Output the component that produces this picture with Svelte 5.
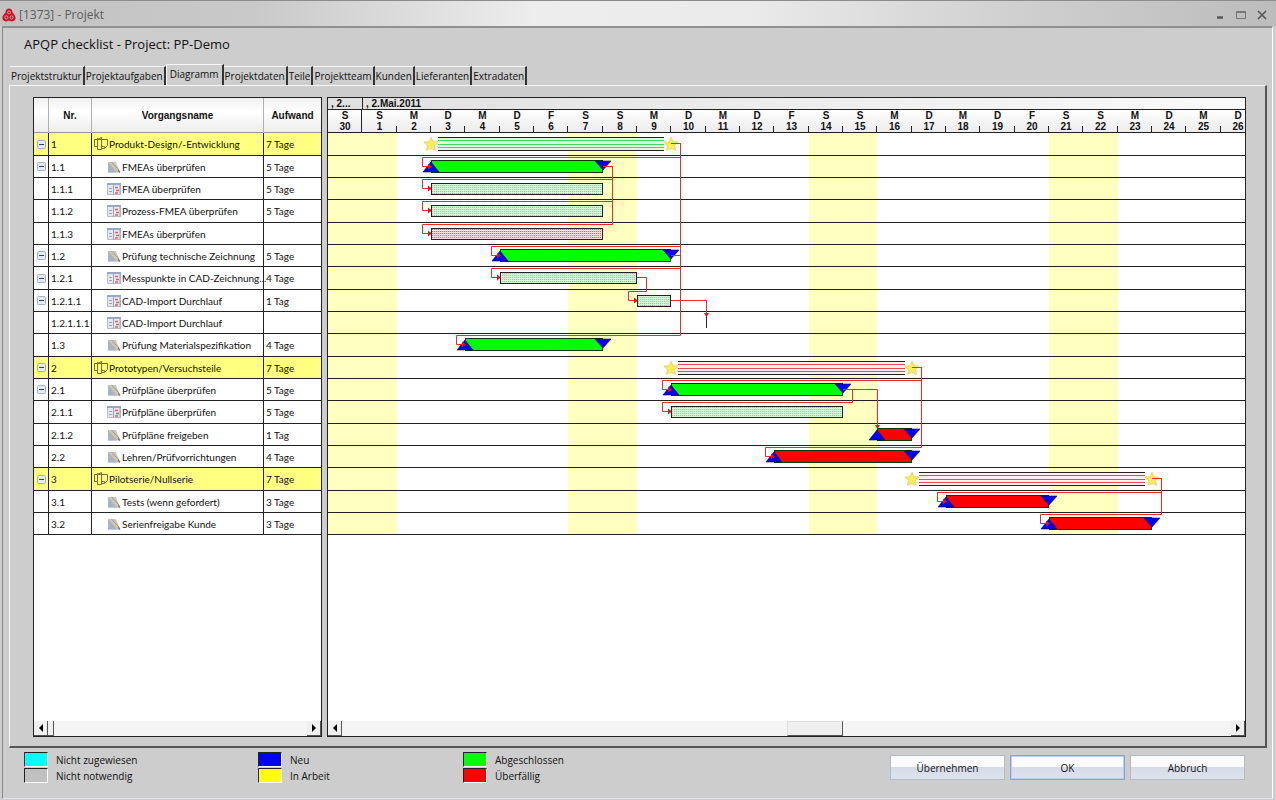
<script lang="ts">
  type Kind = 'phase' | 'task' | 'step' | 'point';

  interface Row {
    nr: string;
    name: string;
    effort: string;
    kind: Kind;
    icon: 'phase' | 'task' | 'form';
    open: boolean;
    start: number;
    end: number;
    color: 'green' | 'red';
  }

  const tabs = ['Projektstruktur', 'Projektaufgaben', 'Diagramm', 'Projektdaten', 'Teile', 'Projektteam', 'Kunden', 'Lieferanten', 'Extradaten'];
  let activeTab = $state('Diagramm');

  // start and end are day columns, counted from Saturday the 30th
  const rows: Row[] = [
    { nr: '1', name: 'Produkt-Design/-Entwicklung', effort: '7 Tage', kind: 'phase', icon: 'phase', open: true, start: 3, end: 10, color: 'green' },
    { nr: '1.1', name: 'FMEAs überprüfen', effort: '5 Tage', kind: 'task', icon: 'task', open: true, start: 3, end: 8, color: 'green' },
    { nr: '1.1.1', name: 'FMEA überprüfen', effort: '5 Tage', kind: 'step', icon: 'form', open: false, start: 3, end: 8, color: 'green' },
    { nr: '1.1.2', name: 'Prozess-FMEA überprüfen', effort: '5 Tage', kind: 'step', icon: 'form', open: false, start: 3, end: 8, color: 'green' },
    { nr: '1.1.3', name: 'FMEAs überprüfen', effort: '', kind: 'step', icon: 'form', open: false, start: 3, end: 8, color: 'red' },
    { nr: '1.2', name: 'Prüfung technische Zeichnung', effort: '5 Tage', kind: 'task', icon: 'task', open: true, start: 5, end: 10, color: 'green' },
    { nr: '1.2.1', name: 'Messpunkte in CAD-Zeichnung...', effort: '4 Tage', kind: 'step', icon: 'form', open: true, start: 5, end: 9, color: 'green' },
    { nr: '1.2.1.1', name: 'CAD-Import Durchlauf', effort: '1 Tag', kind: 'step', icon: 'form', open: true, start: 9, end: 10, color: 'green' },
    { nr: '1.2.1.1.1', name: 'CAD-Import Durchlauf', effort: '', kind: 'point', icon: 'form', open: false, start: 11, end: 11, color: 'green' },
    { nr: '1.3', name: 'Prüfung Materialspezifikation', effort: '4 Tage', kind: 'task', icon: 'task', open: false, start: 4, end: 8, color: 'green' },
    { nr: '2', name: 'Prototypen/Versuchsteile', effort: '7 Tage', kind: 'phase', icon: 'phase', open: true, start: 10, end: 17, color: 'red' },
    { nr: '2.1', name: 'Prüfpläne überprüfen', effort: '5 Tage', kind: 'task', icon: 'task', open: true, start: 10, end: 15, color: 'green' },
    { nr: '2.1.1', name: 'Prüfpläne überprüfen', effort: '5 Tage', kind: 'step', icon: 'form', open: false, start: 10, end: 15, color: 'green' },
    { nr: '2.1.2', name: 'Prüfpläne freigeben', effort: '1 Tag', kind: 'task', icon: 'task', open: false, start: 16, end: 17, color: 'red' },
    { nr: '2.2', name: 'Lehren/Prüfvorrichtungen', effort: '4 Tage', kind: 'task', icon: 'task', open: false, start: 13, end: 17, color: 'red' },
    { nr: '3', name: 'Pilotserie/Nullserie', effort: '7 Tage', kind: 'phase', icon: 'phase', open: true, start: 17, end: 24, color: 'red' },
    { nr: '3.1', name: 'Tests (wenn gefordert)', effort: '3 Tage', kind: 'task', icon: 'task', open: false, start: 18, end: 21, color: 'red' },
    { nr: '3.2', name: 'Serienfreigabe Kunde', effort: '3 Tage', kind: 'task', icon: 'task', open: false, start: 21, end: 24, color: 'red' },
  ];

  // [from row, to row]
  const links = [
    [0, 1], [0, 5], [0, 9], [1, 2], [1, 3], [1, 4], [5, 6], [6, 7],
    [10, 11], [10, 14], [11, 12], [15, 16], [15, 17],
  ];
  const drops = [[7, 8], [11, 13]];

  const letters = ['S', 'S', 'M', 'D', 'M', 'D', 'F'];
  const days = Array.from({ length: 27 }, (_, i) => ({ letter: letters[i % 7], date: i === 0 ? 30 : i }));
  const weekends = [0, 7, 14, 21];

  // three days take 34 + 35 + 34 px, three rows 23 + 22 + 22 px
  const dayX = (d: number) => Math.round((d * 103) / 3);
  const rowY = (r: number) => Math.ceil((r * 67) / 3);
  const barY = (r: number) => rowY(r) - 1;
  const chartHeight = rowY(rows.length);

  const fills = { green: '#00ff00', red: '#ff0000' };
  const lineColors = { green: '#3fd860', red: '#e84858' };
  const tints = { green: '#dcfbdc', red: '#fff0f0' };

  function linkPath([from, to]: number[]) {
    const x1 = dayX(rows[from].end);
    const x2 = dayX(rows[to].start);
    return `M${x1} ${barY(from) + 11.5}H${x1 + 9.5}V${barY(to) + 2.5}H${x2 - 8.5}V${barY(to) + 11.5}H${x2}`;
  }

  function dropPath([from, to]: number[]) {
    return `M${dayX(rows[from].end)} ${barY(from) + 11.5}H${dayX(rows[to].start) + 0.5}V${barY(to) + 4}`;
  }

  const legend = [
    { label: 'Nicht zugewiesen', color: 'cyan' },
    { label: 'Neu', color: 'blue' },
    { label: 'Abgeschlossen', color: 'lime' },
    { label: 'Nicht notwendig', color: 'none' },
    { label: 'In Arbeit', color: 'yellow' },
    { label: 'Überfällig', color: 'red' },
  ];
</script>

{#snippet star(x: number, y: number)}
  <path
    transform="translate({x} {y})"
    d="M0 -6.5L2 -2.2L6.8 -1.8L3.2 1.4L4.4 6L0 4.4L-4.4 6L-3.2 1.4L-6.8 -1.8L-2 -2.2Z"
    fill="#fff04e" stroke="#eedb7c" stroke-width="1.4" stroke-linejoin="round"
  />
{/snippet}

{#snippet arrow(dir: string)}
  <svg width="4" height="8" viewBox="0 0 4 8" aria-hidden="true">
    <path d={dir === 'left' ? 'M4 0V8L0 4Z' : 'M0 0V8L4 4Z'} fill="#000" />
  </svg>
{/snippet}

<div class="window">
  <header class="titlebar">
    <svg width="14" height="14" viewBox="0 0 14 14" aria-hidden="true">
      <path d="M7 0.4C9 0.4 10.4 1.8 10.3 3.6C10.3 5.2 13.6 7 13.6 9.8C13.6 12 12 13.4 10 13.4C8.6 13.4 8 12.8 7 12.8C6 12.8 5.4 13.4 4 13.4C2 13.4 0.4 12 0.4 9.8C0.4 7 3.7 5.2 3.7 3.6C3.6 1.8 5 0.4 7 0.4Z" fill="#cc1124" />
      <g fill="none" stroke="#eeb4b8" stroke-width="0.8">
        <circle cx="7" cy="4.4" r="1.5" />
        <circle cx="4.4" cy="9.4" r="1.6" />
        <circle cx="9.6" cy="9.4" r="1.6" />
      </g>
    </svg>
    <h1>[1373] - Projekt</h1>
    <div class="window-buttons">
      <button aria-label="Minimieren">
        <svg width="12" height="12" viewBox="0 0 12 12"><path d="M3 8.5H9" stroke="#555" stroke-width="2.4" /></svg>
      </button>
      <button aria-label="Maximieren">
        <svg width="12" height="12" viewBox="0 0 12 12"><path d="M1.5 2.5H10.5V9.5H1.5Z" fill="none" stroke="#777" /><path d="M1 3H11" stroke="#777" stroke-width="2" /></svg>
      </button>
      <button aria-label="Schließen">
        <svg width="12" height="12" viewBox="0 0 12 12"><path d="M2 2L10 10M10 2L2 10" stroke="#555" stroke-width="1.6" /></svg>
      </button>
    </div>
  </header>

  <main>
    <h2>APQP checklist - Project: PP-Demo</h2>

    <div class="tabs" role="tablist">
      {#each tabs as tab}
        <button role="tab" class="tab" class:active={tab === activeTab} aria-selected={tab === activeTab} onclick={() => (activeTab = tab)}>{tab}</button>
      {/each}
    </div>

    <section class="panel">
      <div class="list">
        <table>
          <colgroup>
            <col class="col-toggle" />
            <col class="col-nr" />
            <col />
            <col class="col-effort" />
          </colgroup>
          <thead>
            <tr>
              <th aria-label="Aufklappen"></th>
              <th>Nr.</th>
              <th>Vorgangsname</th>
              <th>Aufwand</th>
            </tr>
          </thead>
          <tbody>
            {#each rows as row}
              <tr class:phase={row.kind === 'phase'}>
                <td class="toggle">
                  {#if row.open}
                    <button aria-label="Zuklappen">
                      <svg width="9" height="9" viewBox="0 0 9 9"><rect x="0.5" y="0.5" width="8" height="8" rx="1" fill="#e6eaf2" stroke="#a3b0c4" /><path d="M2 4.5H7" stroke="#33415c" /></svg>
                    </button>
                  {/if}
                </td>
                <td>{row.nr}</td>
                <td>
                  <div class="name" class:child={row.kind !== 'phase'}>
                    {#if row.icon === 'phase'}
                      <svg width="14" height="14" viewBox="0 0 14 14" aria-hidden="true">
                        <path d="M0.5 2.5H13.5V8.5L10.5 11.5H7.5M0.5 2.5V9.5H3M3.5 1V12.5H7.5V0.5L3.5 2.5M7.5 9.5H10.5V11" fill="none" stroke="#77702c" />
                      </svg>
                    {:else if row.icon === 'task'}
                      <svg width="14" height="14" viewBox="0 0 14 14" aria-hidden="true">
                        <path d="M1 2H9L13 12.5H1Z" fill="#c3c9d6" />
                        <path d="M1 2L10 12.5H1Z" fill="#a9b2c6" />
                        <path d="M3.5 2.5L11.5 11" stroke="#dcc88a" stroke-width="2.4" />
                        <path d="M4.5 2L12.5 10.5" stroke="#8d8a84" stroke-width="0.8" />
                        <path d="M11 10.5L13 12.5" stroke="#77777c" stroke-width="1.4" />
                      </svg>
                    {:else}
                      <svg width="14" height="14" viewBox="0 0 14 14" aria-hidden="true">
                        <path d="M0.5 1.5H13.5V12.5H0.5Z" fill="#e6e8ee" stroke="#b8bdc8" />
                        <path d="M0 2H14" stroke="#9aa8c4" stroke-width="2" />
                        <path d="M2 6.5H5M2 9.5H5" stroke="#9aa0ac" />
                        <path d="M6.5 3V13M13 3V13" stroke="#9ea4b2" />
                        <path d="M8 5.5H11M9 8.5H12M8 11H11" stroke="#cf6a70" stroke-width="1.6" />
                      </svg>
                    {/if}
                    <span>{row.name}</span>
                  </div>
                </td>
                <td>{row.effort}</td>
              </tr>
            {/each}
          </tbody>
        </table>
        <div class="scrollbar">
          <button aria-label="Nach links">{@render arrow('left')}</button>
          <div class="track"><div class="thumb small"></div></div>
          <button aria-label="Nach rechts">{@render arrow('right')}</button>
        </div>
      </div>

      <div class="chart">
        <div class="timescale">
          <div class="months">
            <span class="month first">, 2...</span>
            <span class="month">, 2.Mai.2011</span>
          </div>
          <div class="days">
            {#each days as day}
              <div class="day"><span>{day.letter}</span><span>{day.date}</span></div>
            {/each}
          </div>
        </div>

        <svg width="100%" height={chartHeight} role="img" aria-label="Gantt-Diagramm">
          <defs>
            <pattern id="dots-green" width="4" height="4" patternUnits="userSpaceOnUse">
              <rect width="4" height="4" fill="#d2fad2" />
              <path d="M0 0H1V1H0ZM2 2H3V3H2ZM2 0H3V1H2ZM0 2H1V3H0Z" fill="#70ec80" />
            </pattern>
            <pattern id="dots-red" width="4" height="4" patternUnits="userSpaceOnUse">
              <rect width="4" height="4" fill="#ffdcdc" />
              <path d="M0 0H1V1H0ZM2 2H3V3H2ZM2 0H3V1H2ZM0 2H1V3H0Z" fill="#ff6068" />
            </pattern>
          </defs>

          {#each weekends as d}
            <rect x={dayX(d)} y="0" width={dayX(d + 2) - dayX(d)} height={chartHeight} fill="#ffffc0" />
          {/each}
          {#each rows as _, i}
            <rect x="0" y={rowY(i + 1) - 1} width="100%" height="1" fill="#222" />
          {/each}

          {#each rows as row, i}
            {@const x1 = dayX(row.start)}
            {@const x2 = dayX(row.end)}
            {@const y = barY(i)}
            {#if row.kind === 'phase'}
              <rect x={x1 + 7} y={y + 5} width={x2 - x1 - 14} height="14" fill={tints[row.color]} />
              {#each [5, 8, 12, 15, 18] as dy}
                <rect x={x1 + 7} y={y + dy} width={x2 - x1 - 14} height="1" fill={dy === 5 || dy === 18 ? '#222' : lineColors[row.color]} />
              {/each}
              {@render star(x1, y + 12)}
              {@render star(x2, y + 12)}
            {:else if row.kind === 'task'}
              <rect x={x1 + 0.5} y={y + 5.5} width={x2 - x1 - 1} height="12" fill={fills[row.color]} stroke="#063a06" />
              <path d="M{x1} {y + 7}L{x1 + 8} {y + 17}H{x1 - 8}Z" fill="#0000f0" stroke="#000060" stroke-width="0.6" />
              <path d="M{x2} {y + 15}L{x2 + 8} {y + 6}H{x2 - 8}Z" fill="#0000f0" stroke="#000060" stroke-width="0.6" />
            {:else if row.kind === 'step'}
              <rect x={x1 + 0.5} y={y + 6.5} width={x2 - x1 - 1} height="11" fill="url(#dots-{row.color})" stroke="#222" />
            {:else}
              <rect x={x1} y={y + 5} width="1" height="12" fill="#222" />
            {/if}
          {/each}

          {#each links as link}
            {@const x = dayX(rows[link[1]].start)}
            {@const y = barY(link[1])}
            <path d={linkPath(link)} fill="none" stroke="#f02828" />
            <path d="M{x - 3} {y + 8.5}V{y + 14.5}L{x + 1} {y + 11.5}Z" fill="#d81818" />
          {/each}
          {#each drops as drop}
            {@const x = dayX(rows[drop[1]].start)}
            {@const y = barY(drop[1])}
            <path d={dropPath(drop)} fill="none" stroke="#f02828" />
            <path d="M{x - 2} {y + 2}H{x + 3}L{x + 0.5} {y + 6}Z" fill="#d81818" />
          {/each}
        </svg>

        <div class="scrollbar">
          <button aria-label="Nach links">{@render arrow('left')}</button>
          <div class="track"><div class="thumb large"></div></div>
          <button aria-label="Nach rechts">{@render arrow('right')}</button>
        </div>
      </div>
    </section>

    <footer>
      <ul class="legend">
        {#each legend as item}
          <li><span class="swatch {item.color}"></span>{item.label}</li>
        {/each}
      </ul>
      <div class="actions">
        <button>Übernehmen</button>
        <button class="default">OK</button>
        <button>Abbruch</button>
      </div>
    </footer>
  </main>
</div>

<style>
  .window, .window * { box-sizing: border-box; }

  .window {
    display: flex;
    flex-direction: column;
    min-height: 100vh;
    padding: 0 3px 1px 2px;
    background: #cdcdcd;
    font-family: 'Open Sans', 'Noto Sans', sans-serif;
    font-size: 10px;
    color: #111;
  }

  button {
    font: inherit;
    color: inherit;
    padding: 0;
    margin: 0;
    border: 0;
    background: none;
  }

  svg { display: block; flex: none; }

  .titlebar {
    display: flex;
    align-items: center;
    gap: 3px;
    height: 26px;
    margin: 0 -3px 0 -2px;
    padding: 3px 8px 0 2px;
    border-top: 1px solid #8c8c8c;
    background: linear-gradient(90deg, #c2c2c2, #c9c9c9 20%, #ededed 42%, #ebebeb 58%, #cfcfcf 80%, #bcbcbc);
  }

  h1, h2 { margin: 0; font-weight: 400; }
  h1 { flex: 1; font-size: 12px; line-height: 20px; color: #5c5c5c; }
  h2 { padding: 6px 0 11px 21px; font-size: 13px; line-height: 20px; }

  .window-buttons { display: flex; gap: 9px; }

  main {
    flex: 1;
    display: flex;
    flex-direction: column;
    border-top: 2px solid #909090;
    border-left: 1px solid #8a8a8a;
    border-right: 1px solid #fff;
    border-bottom: 1px solid #e4e2f0;
  }

  .tabs {
    display: flex;
    align-items: flex-end;
    height: 20px;
    margin-left: 7px;
  }

  .tab {
    height: 19px;
    padding: 0 1px;
    line-height: 18px;
    border-top: 1px solid #f6f6f6;
    border-right: 2px solid #333;
  }

  .tab.active {
    height: 21px;
    padding: 0 3px 2px;
    border-left: 1px solid #f6f6f6;
    background: #cdcdcd;
    position: relative;
  }

  .panel {
    flex: 1;
    display: flex;
    gap: 5px;
    margin: 0 5px 0 6px;
    padding: 11px 19px 9px 23px;
    border-top: 1px solid #f6f6f6;
    border-left: 1px solid #f6f6f6;
    border-right: 2px solid #555;
    border-bottom: 2px solid #555;
  }

  .list, .chart {
    display: flex;
    flex-direction: column;
    background: #fff;
    border: 1px solid #222;
    font-size: 10px;
  }

  .list {
    flex: none;
    width: 289px;
    font-family: Lato, 'Liberation Sans', sans-serif;
  }

  .chart {
    flex: 1;
    min-width: 0;
    font-family: 'Liberation Sans', Arial, sans-serif;
  }

  table {
    width: 100%;
    table-layout: fixed;
    border-collapse: separate;
    border-spacing: 0;
  }

  .col-toggle { width: 15px; }
  .col-nr { width: 43px; }
  .col-effort { width: 57px; }

  th {
    height: 35px;
    padding: 0;
    font-family: 'Liberation Sans', Arial, sans-serif;
    font-size: 10px;
    border-right: 1px solid #b0b0b0;
    border-bottom: 1px solid #999;
    background: linear-gradient(#f0f0f0, #fff 40%, #ededed);
  }

  td {
    height: 22px;
    padding: 0 2px;
    line-height: 14px;
    white-space: nowrap;
    border-right: 1px solid #222;
    border-bottom: 1px solid #222;
  }

  tr:nth-child(3n + 1) td { height: 23px; }
  th:last-child, td:last-child { border-right: 0; }

  .phase td { background: #ffff80; }

  td.toggle { padding: 0 0 0 3px; }
  .toggle button { display: block; }

  .name { display: flex; align-items: center; gap: 1px; }
  .name.child { padding-left: 13px; }

  .scrollbar {
    display: flex;
    height: 15px;
    margin-top: auto;
    background: #f4f4f4;
  }

  .scrollbar button, .thumb {
    display: flex;
    align-items: center;
    justify-content: center;
    width: 14px;
    background: #efefef;
    border-right: 1px solid #555;
    border-bottom: 1px solid #555;
  }

  .track { flex: 1; display: flex; }
  .thumb.small { width: 6px; }
  .thumb.large {
    width: 56px;
    margin-left: 50%;
    border-top: 1px solid #ddd;
    border-left: 1px solid #ddd;
  }

  .timescale {
    overflow: hidden;
    font-weight: 700;
    line-height: 11px;
    border-bottom: 1px solid #222;
  }

  .months {
    display: flex;
    height: 12px;
    border-bottom: 1px solid #222;
    background: linear-gradient(90deg, #e0e0e0, #fafafa);
  }

  .month { padding-left: 3px; }
  .month.first { width: 35px; border-right: 1px solid #222; }

  .days {
    display: flex;
    height: 22px;
    background: linear-gradient(#fff, #ececec);
  }

  .day {
    flex: none;
    display: flex;
    flex-direction: column;
    align-items: center;
    width: 34px;
    background: linear-gradient(#222, #222) right bottom / 1px 6px no-repeat;
  }

  .day:nth-child(3n + 2) { width: 35px; }
  .day:first-child { background-size: 1px 100%; }

  footer {
    display: flex;
    justify-content: space-between;
    align-items: flex-start;
    padding: 4px 27px 15px 21px;
  }

  .legend {
    display: grid;
    grid-template-columns: 234px 205px auto;
    gap: 1px 0;
    margin: 0;
    padding: 0;
    list-style: none;
  }

  .legend li { display: flex; align-items: center; gap: 8px; height: 15px; }

  .swatch {
    width: 24px;
    height: 15px;
    border: 1px solid #222;
    border-right-color: #fff;
    border-bottom-color: #fff;
  }

  .cyan { background: #00ffff; }
  .blue { background: #0000ff; }
  .lime { background: #00ff00; }
  .yellow { background: #ffff00; }
  .red { background: #ff0000; }
  .none { background: #c0c0c0; }

  .actions { display: flex; gap: 5px; padding-top: 3px; }

  .actions button {
    width: 115px;
    height: 25px;
    border: 1px solid #b4bac6;
    background: linear-gradient(#fbfbfd 48%, #d6dbe8 50%, #dde2ec);
  }

  .actions .default {
    border-color: #86a5d2;
    box-shadow: inset 0 0 0 1px #b8cdea;
  }
</style>
